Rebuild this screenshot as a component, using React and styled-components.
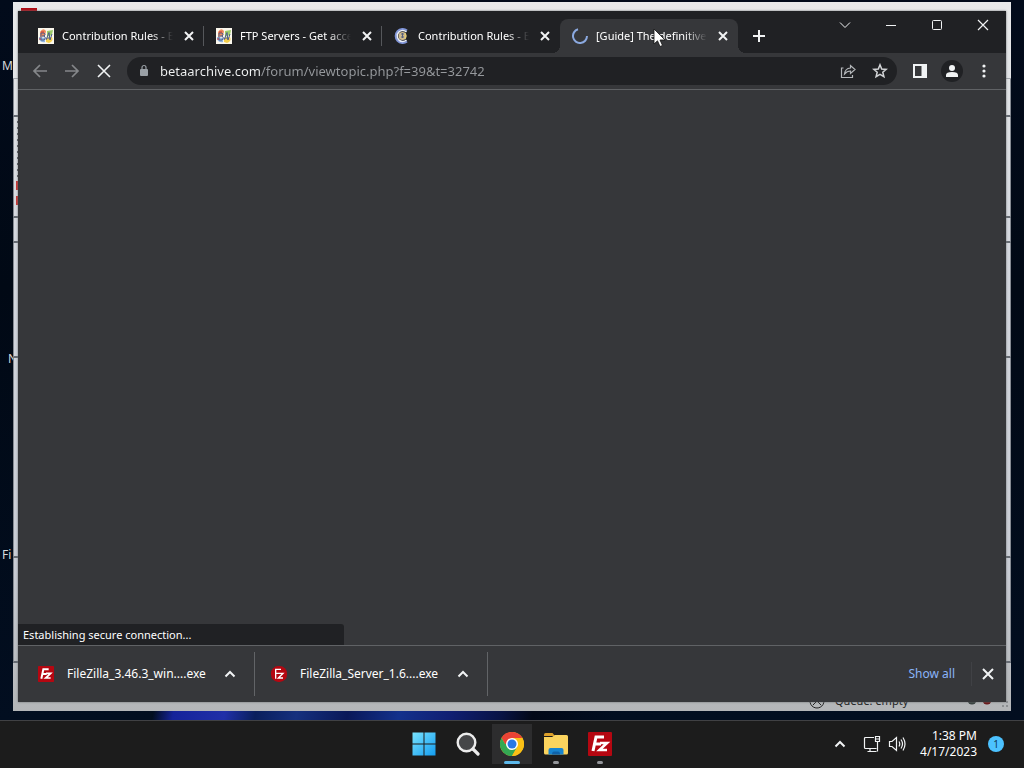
import React from "react";
import styled, { createGlobalStyle, css } from "styled-components";

const ui = `"Noto Sans", "Open Sans", sans-serif`;

const GlobalStyle = createGlobalStyle`
  * { box-sizing: border-box; }
  body { margin: 0; background: #020a18; font-family: ${ui}; }
  button, input { font: inherit; color: inherit; border: 0; padding: 0; margin: 0; background: none; }
  svg { display: block; flex: none; }
`;

const Screen = styled.div`
  display: flex;
  flex-direction: column;
  min-height: 100vh;
  color: #fff;
`;

const Desktop = styled.main`
  position: relative;
  flex: 1;
  overflow: hidden;
  background:
    linear-gradient(100deg, transparent 15%, #15239a 17%, #202fa8 22%, #0a1f5c 25%, #15307e 29%, #0a1858 34%, #13318c 39%, #101f72 44%, #081344 49%, #020817 52%, transparent 60%) bottom / 100% 12px no-repeat,
    linear-gradient(#020b1b, #010915 40%, #020e20);
`;

const DesktopLabel = styled.span`
  position: absolute;
  left: ${(p) => p.$x}px;
  top: ${(p) => p.$y}px;
  font-size: 12px;
  line-height: 16px;
  color: #d5d8dc;
`;

/* FileZilla window behind the browser */
const BackWindow = styled.section`
  position: absolute;
  inset: 2px 13px 9px 13px;
  display: flex;
  flex-direction: column;
  background: linear-gradient(#e8e9ea, #d4d7de 35%, #c9ccd4 80%, #b4b6b8);
  color: #222;
`;

const BackTitle = styled.header`
  height: 77px;
  padding: 6px 8px;
  border-bottom: 1px solid #a3a7ad;
`;

const BackIcon = styled.div`
  width: 16px;
  height: 16px;
  background: #b00d16;
`;

const BackPane = styled.div`
  flex: ${(p) => p.$grow} 0 0;
  border: 1px solid #858a92;
  border-width: 0 1px 2px;
  border-bottom-color: #666b73;
`;

const LogPane = styled(BackPane)`
  background:
    linear-gradient(#c93432 9px, transparent 9px 15px, #c93432 15px) 2px 64px / 2px 24px no-repeat,
    repeating-linear-gradient(#55585e 0 2px, transparent 2px 6px) 3px 4px / 1px 56px no-repeat;
`;

const BackStatus = styled.footer`
  display: flex;
  justify-content: flex-end;
  align-items: flex-end;
  gap: 10px;
  height: 48px;
  padding: 0 2px 2px;
  font-size: 11px;
  line-height: 16px;
`;

const QueueText = styled.span`
  width: 122px;
`;

const BrowserWindow = styled.section`
  position: absolute;
  inset: 11px 18px 18px 18px;
  display: flex;
  flex-direction: column;
  background: #36373a;
  box-shadow: 0 0 2px #6b6e72;
`;

const TabStrip = styled.header`
  display: flex;
  height: 42px;
  padding-left: 8px;
  background: #202124;
`;

const TabList = styled.div`
  display: flex;
  align-items: flex-end;
  min-width: 0;
`;

const Tab = styled.div`
  position: relative;
  display: flex;
  align-items: center;
  width: 178px;
  height: 34px;
  padding: 0 9px 0 12px;
  gap: 8px;
  ${(p) =>
    p.$active
      ? css`
          background: #36373a;
          border-radius: 8px 8px 0 0;
          &::before, &::after {
            content: "";
            position: absolute;
            bottom: 0;
            width: 8px;
            height: 8px;
          }
          &::before { left: -8px; background: radial-gradient(circle at 0 0, transparent 8px, #36373a 8px); }
          &::after { right: -8px; background: radial-gradient(circle at 100% 0, transparent 8px, #36373a 8px); }
        `
      : p.$divided &&
        css`
          background: linear-gradient(#55575b, #55575b) right 0 center / 1px 20px no-repeat;
        `}
`;

const TabTitle = styled.span`
  flex: 1;
  overflow: hidden;
  white-space: nowrap;
  font-size: 11px;
  line-height: 16px;
  mask-image: linear-gradient(90deg, #000 80%, transparent);
`;

const IconButton = styled.button`
  display: grid;
  place-items: center;
  flex: none;
  width: ${(p) => p.$w || 32}px;
  height: ${(p) => p.$h || 28}px;
  color: ${(p) => p.$color || "#f1f3f4"};
`;

const WindowControls = styled.div`
  display: flex;
  margin-left: auto;
`;

const Toolbar = styled.nav`
  display: flex;
  align-items: center;
  height: 37px;
  padding: 0 6px;
  border-bottom: 1px solid #606265;
`;

const AddressBar = styled.label`
  flex: 1;
  display: flex;
  align-items: center;
  min-width: 0;
  height: 28px;
  margin: 0 7px;
  padding: 0 1px 0 10px;
  border-radius: 14px;
  background: #202124;
`;

const Address = styled.input`
  flex: 1;
  min-width: 0;
  height: 24px;
  margin-left: 9px;
  font-size: 13px;
  outline: 0;
  background: linear-gradient(90deg, #f1f3f4 101px, #96999d 101px);
  background-clip: text;
  -webkit-text-fill-color: transparent;
`;

const Avatar = styled.span`
  display: grid;
  place-items: center;
  width: 22px;
  height: 22px;
  border-radius: 50%;
  background: #202124;
`;

const Page = styled.div`
  position: relative;
  flex: 1;
`;

const StatusBubble = styled.div`
  position: absolute;
  left: 0;
  bottom: 0;
  width: 33%;
  height: 21px;
  padding-left: 5px;
  border-radius: 0 3px 0 0;
  background: #202124;
  font-size: 11px;
  line-height: 21px;
`;

const Shelf = styled.footer`
  display: flex;
  align-items: center;
  height: 57px;
  padding: 0 2px 0 4px;
  border-top: 1px solid #606265;
`;

const Download = styled.div`
  display: flex;
  align-items: center;
  width: 233px;
  height: 44px;
  padding: 0 8px 0 16px;
  border-right: 1px solid #626467;
`;

const FileName = styled.span`
  flex: 1;
  margin-left: 13px;
  font-size: 12px;
  line-height: 20px;
  white-space: nowrap;
`;

const ShowAll = styled.a`
  margin-left: auto;
  padding-right: 16px;
  border-right: 1px solid #404145;
  font-size: 12px;
  line-height: 24px;
  color: #8ab4f8;
  text-decoration: none;
`;

const Cursor = styled.svg`
  position: absolute;
  left: 653px;
  top: 28px;
`;

const Taskbar = styled.footer`
  display: grid;
  grid-template-columns: 1fr auto 1fr;
  height: 48px;
  padding-bottom: 2px;
  border-top: 1px solid #404144;
  background: #1c1c1c;
`;

const Apps = styled.div`
  grid-column: 2;
  display: flex;
  align-items: center;
`;

const AppButton = styled.button`
  position: relative;
  display: grid;
  place-items: center;
  width: 44px;
  height: 44px;
  ${(p) =>
    p.$run &&
    css`
      &::after {
        content: "";
        position: absolute;
        bottom: 2px;
        width: ${p.$run === "active" ? 16 : 6}px;
        height: 3px;
        border-radius: 2px;
        background: ${p.$run === "active" ? "#5cb8ea" : "#94969a"};
      }
    `}
  ${(p) =>
    p.$run === "active" &&
    css`
      background: linear-gradient(#2d2d2e, #2d2d2e) center / 40px 40px no-repeat;
    `}
`;

const Tray = styled.div`
  display: flex;
  align-items: center;
  justify-content: flex-end;
  padding-right: 20px;
`;

const Clock = styled.time`
  margin: 0 11px 0 16px;
  text-align: right;
  font-size: 12px;
  line-height: 16px;
`;

const Badge = styled.span`
  width: 16px;
  height: 16px;
  border-radius: 50%;
  background: #4cc2ff;
  color: #0d3a55;
  text-align: center;
  font-size: 10px;
  line-height: 16px;
`;

const Stroke = ({ w = 16, d, sw = 1, children, ...rest }) => (
  <svg width={w} height={w} viewBox={`0 0 ${w} ${w}`} fill="none" stroke="currentColor" strokeWidth={sw} {...rest}>
    {d && <path d={d} />}
    {children}
  </svg>
);

const BetaIcon = () => (
  <svg width="16" height="16" viewBox="0 0 16 16">
    <rect width="16" height="16" fill="#fbf8ee" />
    <path d="M2 4q3-5 6-1l-1 5-5 1z" fill="#ef8b5b" />
    <path d="M9 3l6-1-1 5-5 2z" fill="#9ccb6a" />
    <path d="M1 9l6 1v4q-4 1-6-3z" fill="#8fb4e0" />
    <path d="M8 10l6-1q2 4-3 6l-3-1z" fill="#f5d04e" />
    <path d="M3 5h3q2 1 0 3 3 2 0 4H3zM4 8h3M8 12L11 4.500l1 7.500 2-6M9 10h3" fill="none" stroke="#4d5c8c" />
    <path d="M3 4h3M2 10v2" stroke="#c53b39" />
  </svg>
);

const CollectionIcon = () => (
  <svg width="16" height="16" viewBox="0 0 16 16" fill="none">
    <path d="M13 2.500A7 7 0 1 0 13 13.500" stroke="#8095d8" strokeWidth="2" />
    <path d="M12.500 4A5.500 5.500 0 1 0 12.500 12" stroke="#e9edf7" strokeWidth="1.500" />
    <circle cx="8.500" cy="8" r="4" fill="#cdb98f" />
    <path d="M7 6h3M7 9h3M8.500 5v5" stroke="#56607c" />
    <path d="M11 5l1 3-1 3" stroke="#e8cf69" />
  </svg>
);

const FzIcon = ({ size, round }) => (
  <svg width={size} height={size} viewBox="0 0 24 24">
    <rect width="24" height="24" rx={round ? 11 : 1} fill="#b50711" />
    {round ? (
      <path d="M7 19V5H15M7 11H14M11 11H18L11 18H18" fill="none" stroke="#fff" strokeWidth="2" />
    ) : (
      <g fill="none" stroke="#fff" strokeWidth="3">
        <path d="M5 19L8 5H16M6.500 12H13" />
        <path d="M12 11H19L11.500 18H19" strokeWidth="2.600" />
      </g>
    )}
  </svg>
);

const ChromeIcon = () => (
  <svg width="24" height="24" viewBox="0 0 24 24">
    <circle cx="12" cy="12" r="12" fill="#fbc116" />
    <path d="M1.600 6A12 12 0 0 1 22.400 6H12L6.800 15z" fill="#ea4335" />
    <path d="M1.600 6A12 12 0 0 0 12 24L17.200 15 12 12H5.100z" fill="#34a853" />
    <path d="M22.400 6A12 12 0 0 1 12 24L17.200 15V6z" fill="#fbc116" />
    <circle cx="12" cy="12" r="6" fill="#fff" />
    <circle cx="12" cy="12" r="4.500" fill="#2878e6" />
  </svg>
);

const WindowsIcon = () => (
  <svg width="24" height="24" viewBox="0 0 24 24">
    <defs>
      <linearGradient id="win" gradientUnits="userSpaceOnUse" x1="0" y1="0" x2="24" y2="24">
        <stop stopColor="#7be5ff" />
        <stop offset="1" stopColor="#119bf0" />
      </linearGradient>
    </defs>
    <path d="M0.500 0.500h11v11h-11zM12.500 0.500h11v11h-11zM0.500 12.500h11v11h-11zM12.500 12.500h11v11h-11z" fill="url(#win)" />
  </svg>
);

const SearchIcon = () => (
  <svg width="24" height="24" viewBox="0 0 24 24" fill="none" stroke="#ececec">
    <circle cx="10.500" cy="10.500" r="8.800" strokeWidth="2.400" fill="#454648" />
    <path d="M17 17l5 5" strokeWidth="3.200" strokeLinecap="round" />
  </svg>
);

const FolderIcon = () => (
  <svg width="24" height="24" viewBox="0 0 24 24">
    <path d="M0 2.500q0-1.500 1.500-1.500h7l2.500 3H0z" fill="#dca02a" />
    <path d="M0 5h8l3-2h11.500q1.500 0 1.500 1.500V21q0 1.500-1.500 1.500h-21Q0 22.500 0 21z" fill="#fbd45e" />
    <path d="M4.500 22.500V18q0-2 2-2h11q2 0 2 2v4.500z" fill="#1784d0" />
    <path d="M8 22.500q0-3 2-3h4q2 0 2 3z" fill="#0f62a9" />
  </svg>
);

const Cross = ({ s = 4, sw = 2 }) => (
  <Stroke sw={sw} d={`M${8 - s} ${8 - s}L${8 + s} ${8 + s}M${8 + s} ${8 - s}L${8 - s} ${8 + s}`} />
);
const ChevronUp = () => <Stroke sw={2} d="M3.500 10.500L8 6L12.500 10.500" />;
const Spinner = () => (
  <Stroke sw={2} stroke="#8ba9e0" d="M6 1.300A7 7 0 1 0 15 8" />
);

const tabs = [
  { title: "Contribution Rules - B", icon: <BetaIcon />, divided: true },
  { title: "FTP Servers - Get acce", icon: <BetaIcon />, divided: true },
  { title: "Contribution Rules - B", icon: <CollectionIcon /> },
  { title: "[Guide] The definitive", icon: <Spinner />, active: true },
];

export default function App() {
  return (
    <Screen>
      <GlobalStyle />
      <Desktop>
        <DesktopLabel $x={2} $y={58}>M</DesktopLabel>
        <DesktopLabel $x={8} $y={351}>N</DesktopLabel>
        <DesktopLabel $x={2} $y={547}>Fi</DesktopLabel>

        <BackWindow>
          <BackTitle><BackIcon /></BackTitle>
          <BackPane $grow={37} />
          <LogPane $grow={101} />
          <BackPane $grow={23} />
          <BackPane $grow={115} />
          <BackPane $grow={202} />
          <BackPane $grow={105} />
          <BackStatus>
            <Stroke d="M8 1A7 7 0 1 1 7.900 1M4 12L8 8L12 12" />
            <QueueText>Queue: empty</QueueText>
            <svg width="42" height="14" viewBox="0 0 42 14">
              <circle cx="5" cy="5" r="4.500" fill="#39413f" />
              <circle cx="20" cy="5" r="4.500" fill="#6a1517" />
              <path d="M39 6h2v2h-2zM39 10h2v2h-2zM35 10h2v2h-2z" fill="#8c8f92" />
            </svg>
          </BackStatus>
        </BackWindow>

        <BrowserWindow>
          <TabStrip>
            <TabList>
              {tabs.map((t, i) => (
                <Tab key={i} $active={t.active} $divided={t.divided}>
                  {t.icon}
                  <TabTitle>{t.title}</TabTitle>
                  <IconButton $w={14} $h={16} aria-label="Close tab"><Cross /></IconButton>
                </Tab>
              ))}
              <IconButton $w={42} $h={34} aria-label="New tab">
                <Stroke sw={2} d="M8 2V14M2 8H14" />
              </IconButton>
            </TabList>
            <WindowControls>
              <IconButton $w={46} aria-label="Search tabs"><Stroke d="M3 5.500L8 10.500L13 5.500" /></IconButton>
              <IconButton $w={46} aria-label="Minimize"><Stroke d="M3 8.500H13" /></IconButton>
              <IconButton $w={46} aria-label="Maximize">
                <Stroke><rect x="3.500" y="3.500" width="9" height="9" rx="1" /></Stroke>
              </IconButton>
              <IconButton $w={46} aria-label="Close"><Cross s={5} sw={1.2} /></IconButton>
            </WindowControls>
          </TabStrip>

          <Toolbar>
            <IconButton $color="#85878a" aria-label="Back"><Stroke sw={1.7} d="M15 8H2M8 2L2 8L8 14" /></IconButton>
            <IconButton $color="#85878a" aria-label="Forward"><Stroke sw={1.7} d="M1 8H14M8 2L14 8L8 14" /></IconButton>
            <IconButton aria-label="Stop loading"><Cross s={6} sw={1.6} /></IconButton>
            <AddressBar>
              <svg width="14" height="14" viewBox="0 0 14 14">
                <path d="M4 5h6q1 0 1 1v5q0 1-1 1H4q-1 0-1-1V6q0-1 1-1z" fill="#9aa0a6" />
                <path d="M5 5V3.500a2 2 0 0 1 4 0V5" fill="none" stroke="#9aa0a6" strokeWidth="1.200" />
              </svg>
              <Address aria-label="Address" defaultValue="betaarchive.com/forum/viewtopic.php?f=39&t=32742" />
              <IconButton $color="#b4b7ba" aria-label="Share">
                <Stroke sw={1.2} d="M3.500 5H1.500V14.500H12.500V12M4.500 11Q5 5.500 10.500 5V2.500L15 6.500L10.500 10.500V8Q7 8 4.500 11Z" />
              </IconButton>
              <IconButton $color="#d2d4d6" aria-label="Bookmark this tab">
                <Stroke sw={1.5} d="M8 1.800L9.700 6L14.200 6.400L10.800 9.300L11.900 13.700L8 11.300L4.100 13.700L5.200 9.300L1.800 6.400L6.300 6Z" />
              </IconButton>
            </AddressBar>
            <IconButton aria-label="Side panel">
              <svg width="16" height="16" viewBox="0 0 16 16">
                <path fillRule="evenodd" d="M1 1h14v14H1zM3 3v10h6.500V3z" fill="#f1f3f4" />
              </svg>
            </IconButton>
            <IconButton aria-label="Profile">
              <Avatar>
                <svg width="14" height="14" viewBox="0 0 14 14" fill="#f1f3f4">
                  <circle cx="7" cy="4" r="3" />
                  <path d="M1 13v-2q0-3 6-3t6 3v2z" />
                </svg>
              </Avatar>
            </IconButton>
            <IconButton aria-label="Menu">
              <svg width="16" height="16" viewBox="0 0 16 16" fill="#f1f3f4">
                <circle cx="8" cy="3" r="1.600" /><circle cx="8" cy="8" r="1.600" /><circle cx="8" cy="13" r="1.600" />
              </svg>
            </IconButton>
          </Toolbar>

          <Page><StatusBubble role="status">Establishing secure connection...</StatusBubble></Page>

          <Shelf>
            <Download>
              <FzIcon size={16} />
              <FileName>FileZilla_3.46.3_win....exe</FileName>
              <IconButton aria-label="Download options"><ChevronUp /></IconButton>
            </Download>
            <Download>
              <FzIcon size={16} round />
              <FileName>FileZilla_Server_1.6....exe</FileName>
              <IconButton aria-label="Download options"><ChevronUp /></IconButton>
            </Download>
            <ShowAll href="#downloads">Show all</ShowAll>
            <IconButton aria-label="Close downloads bar"><Cross s={5} /></IconButton>
          </Shelf>
        </BrowserWindow>

        <Cursor width="14" height="21" viewBox="0 0 14 21">
          <path d="M1 1V16L4.500 12.800L7 18.500L9.500 17.400L7 12H12Z" fill="#fff" stroke="#111" strokeWidth=".8" />
        </Cursor>
      </Desktop>

      <Taskbar>
        <Apps>
          <AppButton aria-label="Start"><WindowsIcon /></AppButton>
          <AppButton aria-label="Search"><SearchIcon /></AppButton>
          <AppButton aria-label="Google Chrome" $run="active"><ChromeIcon /></AppButton>
          <AppButton aria-label="File Explorer" $run="open"><FolderIcon /></AppButton>
          <AppButton aria-label="FileZilla" $run="open"><FzIcon size={24} /></AppButton>
        </Apps>
        <Tray>
          <IconButton aria-label="Show hidden icons"><ChevronUp /></IconButton>
          <IconButton aria-label="Network">
            <Stroke w={18} sw={1.2} d="M11 2.500H2.500Q1.500 2.500 1.500 3.500V12.500Q1.500 13.500 2.500 13.500H13.500M4.500 16.500H13.500M7 13.500V16M12.500 1.500H16.500V6.500H12.500ZM14.500 6.500V16.500M12.500 4H16" />
          </IconButton>
          <IconButton $w={16} aria-label="Volume">
            <Stroke w={18} sw={1.2} d="M1.500 6.500H4L8.500 2.500V15.500L4 11.500H1.500ZM11 6.500Q12.500 9 11 11.500M13 4.500Q16 9 13 13.500M15 2.500Q19 9 15 15.500" />
          </IconButton>
          <Clock>1:38 PM<br />4/17/2023</Clock>
          <Badge>1</Badge>
        </Tray>
      </Taskbar>
    </Screen>
  );
}
